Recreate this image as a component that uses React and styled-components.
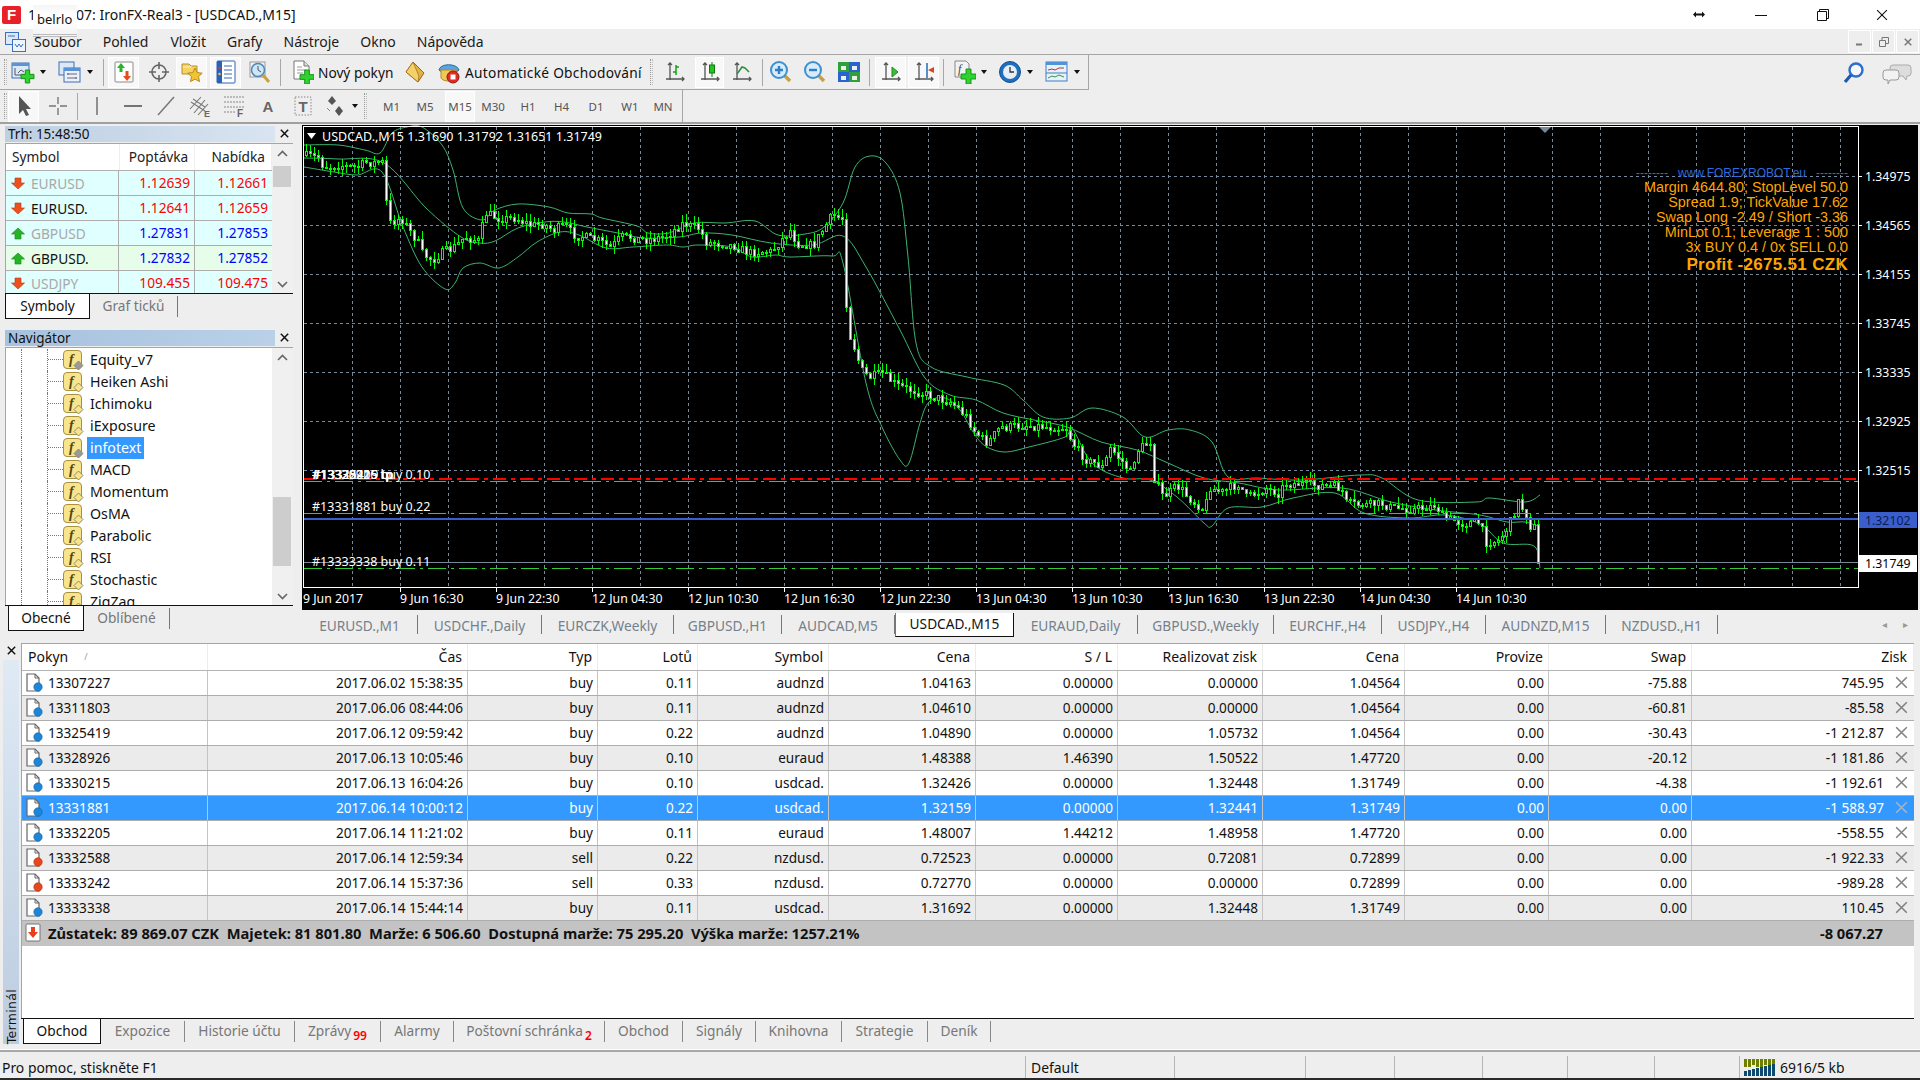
import React from "react";
import styled, { createGlobalStyle } from "styled-components";

const GlobalStyle = createGlobalStyle`
  html, body { margin: 0; padding: 0; background: #eeeeee; overflow: hidden; }
  body { font: 13.6px "Noto Sans", "Open Sans", sans-serif; color: #111; }
  * { box-sizing: border-box; }
`;

const Win = styled.div`
  width: 1920px;
  height: 1080px;
  display: flex;
  flex-direction: column;
  position: relative;
  overflow: hidden;
  background: #eeeeee;
`;

/* ---- title bar + menu ---- */
const TitleBar = styled.div`
  height: 29px;
  background: #fff;
  display: flex;
  align-items: center;
  padding-left: 2px;
  font-size: 14px;
`;
const AppLogo = styled.div`
  width: 19px;
  height: 18px;
  margin-right: 7px;
  background: #e8202a;
  border-radius: 2px;
  color: #fff;
  font: bold 15px "Liberation Sans", sans-serif;
  display: flex;
  align-items: center;
  justify-content: center;
`;
const TitleRest = styled.span`
  margin-left: 40px;
`;
const WinBtns = styled.div`
  margin-left: auto;
  display: flex;
  align-items: center;
`;
const WinBtn = styled.div`
  width: ${(p) => p.$w}px;
  display: flex;
  justify-content: center;
`;
const Smudge = styled.div`
  position: absolute;
  left: 33px;
  top: 5px;
  width: 44px;
  height: 32px;
  padding: 7px 0 0 4px;
  font-size: 13px;
  line-height: 14px;
  z-index: 5;
  background: linear-gradient(#f2f2f2cc, #ffffffee 40%, #f4f4f4dd);
  border-bottom: 3px double #bbb;
`;
const MenuBar = styled.div`
  height: 25px;
  display: flex;
  align-items: center;
  padding-left: 5px;
  font-size: 14px;
`;
const MenuItem = styled.div`
  margin-left: ${(p) => p.$ml}px;
  color: #1a1a1a;
`;
const MdiBtns = styled.div`
  margin-left: auto;
  display: flex;
  gap: 1px;
  padding-right: 1px;
`;
const MdiBtn = styled.div`
  width: 23px;
  height: 23px;
  border: 1px solid #fff;
  display: flex;
  align-items: center;
  justify-content: center;
`;

/* ---- toolbars ---- */
const Band = styled.div`
  height: ${(p) => p.$h}px;
  display: flex;
  border-top: ${(p) => (p.$top ? "1px solid #a5a5a5" : "none")};
`;
const ToolGroup = styled.div`
  width: ${(p) => p.$w}px;
  display: flex;
  align-items: center;
  padding-left: 4px;
  border-right: 1px solid #a5a5a5;
  border-bottom: ${(p) => (p.$bottom ? "1px solid #a5a5a5" : "none")};
`;
const Grip = styled.div`
  flex: none;
  width: 3px;
  height: 26px;
  margin-left: ${(p) => p.$ml || 0}px;
  border-left: 1px dotted #999;
  border-right: 1px dotted #bbb;
`;
const Sep = styled.div`
  flex: none;
  width: 1px;
  height: 27px;
  margin-left: ${(p) => p.$ml || 0}px;
  background: #a8a8a8;
`;
const Tool = styled.div`
  flex: none;
  width: ${(p) => p.$w}px;
  height: 31px;
  margin-left: ${(p) => p.$ml || 0}px;
  padding-left: ${(p) => p.$pl || 0}px;
  display: flex;
  align-items: center;
  justify-content: ${(p) => (p.$pl !== undefined ? "flex-start" : "center")};
  border: 1px solid ${(p) => (p.$on ? "#fff" : "transparent")};
  background: ${(p) => (p.$on ? "#f8f8f8" : "transparent")};
  white-space: nowrap;
  font-size: 13.7px;
`;
const Caret = styled.span`
  flex: none;
  margin-left: 5px;
  border-left: 3.5px solid transparent;
  border-right: 3.5px solid transparent;
  border-top: 4px solid #111;
`;
const ToolLabel = styled.span`
  margin-left: 4px;
  letter-spacing: ${(p) => p.$sp || 0}px;
`;
const PeriodLabel = styled.span`
  font-size: 11.5px;
  color: #555;
`;
const LetterA = styled.span`
  font: bold 15px "Liberation Sans", sans-serif;
  color: #666;
`;
const RightTools = styled.div`
  margin-left: auto;
  display: flex;
  align-items: center;
  gap: 16px;
  padding-right: 8px;
  height: 35px;
`;

/* ---- main area ---- */
const Main = styled.div`
  height: 515px;
  display: flex;
  border-top: 2px solid #a0a0a0;
`;
const LeftCol = styled.div`
  width: 302px;
  flex: none;
  padding: 2px 9px 0 5px;
  display: flex;
  flex-direction: column;
`;
const PanelHead = styled.div`
  display: flex;
  align-items: flex-start;
  height: 17px;
  width: 288px;
`;
const PanelTitle = styled.div`
  width: 270px;
  height: 16px;
  line-height: 16px;
  padding-left: 3px;
  font-size: 13.5px;
  background: ${(p) =>
    p.$active
      ? "linear-gradient(90deg, #a7c2de, #b9d0e8)"
      : "linear-gradient(90deg, #bdcfe1, #d8e4f1)"};
`;
const PanelClose = styled.div`
  flex: 1;
  display: flex;
  justify-content: center;
  padding-top: 3px;
`;
const Framed = styled.div`
  height: ${(p) => p.$h}px;
  display: flex;
  background: #fff;
  border-top: 1px solid #a5a5a5;
  overflow: hidden;
`;
const MarketTable = styled.div`
  width: 267px;
  flex: none;
  border-left: 1px solid #a5a5a5;
`;
const MarketHead = styled.div`
  display: flex;
  height: 27px;
  border-bottom: 1px solid #b0b0b0;
`;
const MarketHeadCell = styled.div`
  width: ${(p) => p.$w}px;
  padding: 0 6px;
  line-height: 26px;
  text-align: ${(p) => (p.$left ? "left" : "right")};
  border-right: 1px solid #eee;
  font-size: 13.7px;
  color: #222;
`;
const MarketRow = styled.div`
  display: flex;
  height: 25px;
  background: ${(p) => (p.$green ? "#e6fde9" : "#e0ffff")};
  border-bottom: 1px solid #acacac;
`;
const SymbolCell = styled.div`
  width: 113px;
  display: flex;
  align-items: center;
  gap: 6px;
  padding-left: 5px;
  color: ${(p) => (p.$dim ? "#a8a8a8" : "#111")};
  border-right: 1px solid #acacac;
  font-size: 13.7px;
`;
const PriceCell = styled.div`
  width: ${(p) => p.$w}px;
  padding-right: 4px;
  text-align: right;
  line-height: 24px;
  color: ${(p) => (p.$down ? "#ff0000" : "#0000ff")};
  border-right: ${(p) => (p.$last ? "none" : "1px solid #acacac")};
  font-size: 13.7px;
`;
const ScrollTrack = styled.div`
  flex: 1;
  background: #f0f0f0;
  position: relative;
  display: flex;
  flex-direction: column;
  align-items: center;
  justify-content: space-between;
  padding: 6px 0 5px;
`;
const ScrollThumb = styled.div`
  position: absolute;
  left: 1px;
  right: 2px;
  top: ${(p) => p.$top}px;
  height: ${(p) => p.$h}px;
  background: #cdcdcd;
`;
const SideTabs = styled.div`
  height: ${(p) => p.$h}px;
  display: flex;
  align-items: flex-start;
  border-top: 1px solid #111;
  font-size: 13.7px;
  padding-left: ${(p) => p.$pl || 0}px;
`;
const SideTab = styled.div`
  width: ${(p) => p.$w}px;
  height: ${(p) => (p.$on ? "25px" : "21px")};
  margin-top: ${(p) => (p.$on ? 0 : 2)}px;
  text-align: center;
  line-height: ${(p) => (p.$on ? "24px" : "20px")};
  color: ${(p) => (p.$on ? "#111" : "#777")};
  background: ${(p) => (p.$on ? "#fff" : "transparent")};
  border: ${(p) => (p.$on ? "1px solid #111" : "none")};
  border-top: none;
  border-right: ${(p) => (p.$on ? "1px solid #111" : "1px solid #777")};
`;
const TreeRow = styled.div`
  height: 22px;
  flex: none;
  display: flex;
  align-items: center;
`;
const TreeBody = styled.div`
  width: 267px;
  flex: none;
  padding-top: 1px;
  overflow: hidden;
  border-left: 1px solid #a5a5a5;
`;
const Guide = styled.div`
  height: 22px;
  width: ${(p) => p.$w}px;
  margin-left: ${(p) => p.$ml || 0}px;
  flex: none;
  border-left: 1px dotted #777;
`;
const Branch = styled.div`
  height: 11px;
  border-bottom: 1px dotted #777;
`;
const TreeLabel = styled.div`
  margin-left: ${(p) => (p.$sel ? 3 : 6)}px;
  padding: 0 ${(p) => (p.$sel ? 3 : 0)}px;
  line-height: 22px;
  font-size: 14.2px;
  background: ${(p) => (p.$sel ? "#3399ff" : "transparent")};
  color: ${(p) => (p.$sel ? "#fff" : "#111")};
`;

/* ---- chart ---- */
const ChartCol = styled.div`
  flex: 1;
  display: flex;
  flex-direction: column;
  padding: 1px 2px 0 0;
  min-width: 0;
`;
const ChartBox = styled.div`
  height: 485px;
  background: #000;
  position: relative;
  flex: none;
`;
const ChartSvg = styled.svg`
  display: block;
  font-family: "Noto Sans", sans-serif;
  white-space: pre;
`;
const InfoPanel = styled.div`
  position: absolute;
  right: 70px;
  top: 42px;
  text-align: right;
  font: 14.4px/15px "Liberation Sans", sans-serif;
  color: #ffa500;
  white-space: pre;
`;
const InfoHead = styled.div`
  color: #2f6bdc;
  font-size: 12px;
  line-height: 13px;
`;
const InfoProfit = styled.div`
  font-weight: bold;
  font-size: 17px;
  letter-spacing: 0.3px;
  line-height: 19px;
`;
const ChartTabs = styled.div`
  margin-top: 3px;
  height: 22px;
  display: flex;
  font-size: 13.7px;
`;
const ChartTab = styled.div`
  width: ${(p) => p.$w}px;
  text-align: center;
  line-height: ${(p) => (p.$on ? "22px" : "21px")};
  color: ${(p) => (p.$on ? "#111" : "#75808a")};
  background: ${(p) => (p.$on ? "#fff" : "transparent")};
  border-right: 1px solid ${(p) => (p.$on ? "#111" : "#777")};
  border-bottom: ${(p) => (p.$on ? "1px solid #111" : "none")};
  border-left: ${(p) => (p.$on ? "1px solid #777" : "none")};
  height: ${(p) => (p.$on ? "24px" : "19px")};
  margin-top: ${(p) => (p.$on ? 0 : 2)}px;
`;
const TabArrows = styled.div`
  margin-left: auto;
  display: flex;
  gap: 16px;
  padding: 4px 10px 0 0;
  color: #999;
  font-size: 10px;
`;

/* ---- terminal ---- */
const Terminal = styled.div`
  height: 413px;
  display: flex;
  padding-right: 6px;
  border-bottom: 1px solid #fff;
`;
const Strip = styled.div`
  width: 21px;
  flex: none;
  display: flex;
  flex-direction: column;
  padding: 9px 2px 5px 3px;
`;
const StripClose = styled.div`
  height: 14px;
  display: flex;
  justify-content: center;
`;
const StripBar = styled.div`
  flex: 1;
  display: flex;
  align-items: flex-start;
  justify-content: center;
  background: linear-gradient(#dfeaf5, #bcccdf);
`;
const StripText = styled.div`
  writing-mode: vertical-rl;
  transform: rotate(180deg);
  font: 12.5px "DejaVu Sans", sans-serif;
  letter-spacing: 0.3px;
  margin-top: auto;
`;
const TermBody = styled.div`
  flex: 1;
  display: flex;
  flex-direction: column;
  margin-top: 6px;
  min-width: 0;
`;
const Grid = styled.div`
  flex: 1;
  background: #fff;
  border-top: 1px solid #a5a5a5;
  border-left: 1px solid #a5a5a5;
  display: flex;
  flex-direction: column;
`;
const GridRow = styled.div`
  display: flex;
  height: 25px;
  flex: none;
  color: ${(p) => (p.$sel ? "#fff" : "#111")};
  background: ${(p) => (p.$sel ? "#3399ff" : p.$alt ? "#ebebeb" : "#fff")};
  border-bottom: 1px solid #adadad;
`;
const GridHead = styled(GridRow)`
  height: 27px;
  background: #fff;
  border-bottom: 1px solid #b4b4b4;
  font-size: 14px;
`;
const Cell = styled.div`
  width: ${(p) => p.$w}px;
  flex: none;
  display: flex;
  align-items: center;
  justify-content: ${(p) => (p.$left ? "flex-start" : "flex-end")};
  padding: ${(p) => (p.$left ? "0 0 1px 3px" : "0 4px 2px 0")};
  border-right: 1px solid ${(p) => (p.$head ? "#ececec" : "#c4c4c4")};
  white-space: nowrap;
  gap: 5px;
`;
const ProfitCell = styled(Cell)`
  padding-right: 6px;
  border-right: none;
  gap: 11px;
`;
const SortMark = styled.span`
  margin-left: 10px;
  color: #999;
  font-size: 9px;
`;
const HeadText = styled.span`
  padding-right: 1px;
  margin-left: ${(p) => p.$ml || 0}px;
  margin-right: ${(p) => p.$mr || 0}px;
`;
const TotalRow = styled.div`
  height: 25px;
  flex: none;
  display: flex;
  align-items: center;
  background: #c3c3c3;
  font-weight: 700;
  font-size: 14.7px;
  padding: 0 31px 2px 3px;
`;
const TotalText = styled.span`
  margin-left: 7px;
  white-space: pre;
`;
const TotalSum = styled.span`
  margin-left: auto;
`;
const TermTabs = styled.div`
  height: 31px;
  flex: none;
  display: flex;
  padding-left: 2px;
  border-top: 1px solid #111;
  font-size: 13.7px;
`;
const TermTab = styled.div`
  width: ${(p) => p.$w}px;
  height: ${(p) => (p.$on ? "25px" : "21px")};
  margin-top: ${(p) => (p.$on ? 0 : 2)}px;
  text-align: center;
  line-height: ${(p) => (p.$on ? "24px" : "20px")};
  color: ${(p) => (p.$on ? "#111" : "#777")};
  background: ${(p) => (p.$on ? "#fff" : "transparent")};
  border-left: ${(p) => (p.$on ? "1px solid #111" : "none")};
  border-bottom: ${(p) => (p.$on ? "1px solid #111" : "none")};
  border-right: 1px solid ${(p) => (p.$on ? "#111" : "#888")};
`;
const Badge = styled.sub`
  color: #ff0000;
  font-size: 12px;
  font-weight: 600;
  margin-left: 2px;
  line-height: 0;
`;

/* ---- status bar ---- */
const StatusBar = styled.div`
  height: 28px;
  display: flex;
  border-top: 2px solid #a8a8a8;
`;
const StatusCell = styled.div`
  width: ${(p) => p.$w}px;
  flex: none;
  display: flex;
  align-items: center;
  gap: 5px;
  margin-top: 4px;
  height: 23px;
  padding-left: ${(p) => p.$pl || 0}px;
  border-left: ${(p) => (p.$first ? "none" : "1px solid #b5b5b5")};
  font-size: 13.9px;
`;
const BottomEdge = styled.div`
  height: 2px;
  background: #2a2a2a;
  margin-top: auto;
`;

/* ---- icons ---- */
const Plus = ({ x = 12, y = 11, s = 12 }) => (
  <path
    d={`M${x + s / 3} ${y}h${s / 3}v${s / 3}h${s / 3}v${s / 3}h${-s / 3}v${s / 3}h${-s / 3}v${-s / 3}h${-s / 3}v${-s / 3}h${s / 3}z`}
    fill="#2fd32f"
    stroke="#138a13"
    strokeWidth="0.9"
  />
);
const Svg = ({ s = 24, children }) => (
  <svg width={s} height={s} viewBox="0 0 24 24" style={{ flex: "none" }}>
    {children}
  </svg>
);
const Axes = () => <path d="M7 3v17M3 19h18M5 5l2-2 2 2M19 17l2 2-2 2" fill="none" stroke="#555" strokeWidth="1.3" />;

const NewChartIcon = () => (
  <Svg>
    <rect x="1" y="3" width="17" height="15" fill="#dbe8f6" stroke="#3f6fb0" />
    <rect x="1" y="3" width="17" height="3" fill="#5c93d4" />
    <path d="M4 8v7h10M7 13l3-3 3 2" fill="none" stroke="#556" />
    <Plus x={10} y={10} s={13} />
  </Svg>
);
const ProfilesIcon = () => (
  <Svg>
    <rect x="1" y="2" width="15" height="13" fill="#dbe8f6" stroke="#3f6fb0" />
    <rect x="6" y="8" width="16" height="14" fill="#eaf1fa" stroke="#3f6fb0" />
    <rect x="6" y="8" width="16" height="3" fill="#5c93d4" />
    <path d="M9 14h10M9 18h10M10 13v2M18 17v2" stroke="#667" fill="none" />
  </Svg>
);
const MarketIcon = () => (
  <Svg>
    <rect x="3" y="2" width="18" height="20" rx="1" fill="#fff" stroke="#8a8a8a" />
    <path d="M9 3l4 5h-2.500v4h-3V8H5z" fill="#28b528" />
    <path d="M15 21l-4-5h2.500v-5h3v5H19z" fill="#e8491d" />
  </Svg>
);
const CrossIcon = () => (
  <Svg>
    <circle cx="12" cy="12" r="7" fill="none" stroke="#666" strokeWidth="1.6" />
    <path d="M12 2v7M12 15v7M2 12h7M15 12h7" stroke="#666" strokeWidth="1.6" />
  </Svg>
);
const FolderStarIcon = () => (
  <Svg>
    <path d="M2 4h7l2 2h6v8H2z" fill="#f4d264" stroke="#b8902c" />
    <path d="M3 7h8v-1" fill="none" stroke="#fff2bd" />
    <path d="M15 8l2.200 4.600 5 .6-3.700 3.400 1 5-4.500-2.500-4.500 2.500 1-5-3.700-3.400 5-.6z" fill="#f4c430" stroke="#b58a1b" />
  </Svg>
);
const TerminalIcon = () => (
  <Svg>
    <rect x="3" y="1" width="18" height="22" rx="1" fill="#fff" stroke="#2a62b8" />
    <rect x="3" y="1" width="5" height="22" fill="#2a62b8" />
    <path d="M10 6h8M10 10h8M10 14h8M10 18h8" stroke="#7a9cd0" strokeWidth="1.5" />
    <circle cx="5.5" cy="8" r="1.2" fill="#e34" />
    <circle cx="5.5" cy="14" r="1.2" fill="#fc3" />
  </Svg>
);
const TesterIcon = () => (
  <Svg>
    <rect x="2" y="2" width="15" height="15" fill="#f3f3f3" stroke="#999" />
    <circle cx="10" cy="10" r="6.5" fill="#cfe6f7" stroke="#4f88b8" strokeWidth="1.5" />
    <path d="M10 6v4l3 2" fill="none" stroke="#456" />
    <path d="M15 15l6 7" stroke="#c9a23c" strokeWidth="3" />
  </Svg>
);
const OrderIcon = () => (
  <Svg>
    <path d="M4 1h10l5 5v13H4z" fill="#fff" stroke="#777" />
    <path d="M14 1v5h5" fill="#ddd" stroke="#777" />
    <path d="M7 7h5M7 10h9M7 13h6" stroke="#999" />
    <Plus x={10} y={10} s={14} />
  </Svg>
);
const GoldIcon = () => (
  <Svg>
    <path d="M10 2l11 11-6 9L3 12z" fill="#e3b341" stroke="#96641a" />
    <path d="M10 2l-7 10 12 10 1-6z" fill="#f4d068" stroke="#96641a" strokeWidth="0.7" />
  </Svg>
);
const AutoIcon = () => (
  <Svg>
    <path d="M2 10c1-7 18-7 20 0-1 3-19 3-20 0z" fill="#5ca4dc" stroke="#2f6ba0" />
    <path d="M4 10v8c2 4 13 4 15 0v-8z" fill="#f2c75a" stroke="#b58a1b" />
    <circle cx="16" cy="17" r="6" fill="#e02c20" stroke="#901810" />
    <rect x="13.5" y="14.5" width="5" height="5" fill="#fff" />
  </Svg>
);
const BarsIcon = () => (
  <Svg>
    <Axes />
    <path d="M13 5v10M13 7h3M10 12h3" stroke="#18a018" strokeWidth="1.5" fill="none" />
  </Svg>
);
const CandleIcon = () => (
  <Svg>
    <Axes />
    <path d="M14 2v15" stroke="#0c7a0c" />
    <rect x="11.5" y="5" width="5" height="8" fill="#25c425" stroke="#0c7a0c" />
  </Svg>
);
const LineIcon = () => (
  <Svg>
    <Axes />
    <path d="M7 14l5-7 3 1 4 4" fill="none" stroke="#2c8f3c" strokeWidth="1.5" />
  </Svg>
);
const ZoomIcon = ({ minus }) => (
  <Svg>
    <path d="M15 15l6 6" stroke="#c9a23c" strokeWidth="3.5" />
    <circle cx="10" cy="10" r="8" fill="#d6ecfa" stroke="#3e8fd0" strokeWidth="2" />
    <path d={minus ? "M6 10h8" : "M6 10h8M10 6v8"} stroke="#2e7fc4" strokeWidth="2.4" />
  </Svg>
);
const TileIcon = () => (
  <Svg>
    <rect x="1" y="2" width="11" height="10" fill="#2fa03a" />
    <rect x="12" y="2" width="11" height="10" fill="#2c62d0" />
    <rect x="1" y="12" width="11" height="10" fill="#2c62d0" />
    <rect x="12" y="12" width="11" height="10" fill="#2fa03a" />
    <path d="M4 6h5v4H4zM15 6h5v4h-5zM4 16h5v4H4zM15 16h5v4h-5z" fill="#e8f0e8" />
  </Svg>
);
const ScrollIcon = () => (
  <Svg>
    <Axes />
    <path d="M13 7l6 5-6 5z" fill="#3bbf3b" stroke="#1f8a1f" />
  </Svg>
);
const ShiftIcon = () => (
  <Svg>
    <Axes />
    <path d="M15 3v15" stroke="#1f6fb8" strokeWidth="1.5" />
    <path d="M16 10l6-3v6z" fill="#d8481c" />
  </Svg>
);
const IndicatorIcon = () => (
  <Svg>
    <path d="M3 1h11l3 3v13H3z" fill="#f3f3f3" stroke="#888" />
    <text x="6" y="13" fontSize="12" fontStyle="italic" fontFamily="Liberation Serif" fill="#444">f</text>
    <Plus x={9} y={9} s={15} />
  </Svg>
);
const ClockIcon = () => (
  <Svg>
    <circle cx="12" cy="12" r="10.5" fill="#1f6fc0" stroke="#12508f" />
    <circle cx="12" cy="12" r="7" fill="#e6eef6" />
    <path d="M12 7v5h4" fill="none" stroke="#333" strokeWidth="1.3" />
  </Svg>
);
const TemplateIcon = () => (
  <Svg>
    <rect x="1" y="2" width="21" height="19" fill="#e8f1fb" stroke="#3f7fc4" />
    <rect x="1" y="2" width="21" height="3" fill="#4f93d8" />
    <path d="M1 13h21" stroke="#3f7fc4" />
    <path d="M3 10l4-1 3 1 4-2 5 0" fill="none" stroke="#b5351c" />
    <path d="M3 18l4-2 3 1 4-2 5 2" fill="none" stroke="#2f9a3c" />
  </Svg>
);
const ArrowCursor = () => (
  <Svg>
    <path d="M7 2v18l4-4 3 6 3-1-3-6h5z" fill="#555" />
  </Svg>
);
const ThinCross = () => (
  <Svg>
    <path d="M12 3v7M12 14v7M3 12h7M14 12h7" stroke="#777" strokeWidth="1.4" />
  </Svg>
);
const VLineIcon = () => <Svg><path d="M12 3v18" stroke="#777" strokeWidth="1.6" /></Svg>;
const HLineIcon = () => <Svg><path d="M3 12h18" stroke="#666" strokeWidth="1.8" /></Svg>;
const TrendIcon = () => <Svg><path d="M4 21L20 3" stroke="#777" strokeWidth="1.5" /></Svg>;
const ChannelIcon = () => (
  <Svg>
    <path d="M2 15L13 3M6 19L17 6M10 21L20 10M3 8l14 9M5 5l12 8" stroke="#777" strokeWidth="1.1" fill="none" />
    <text x="16" y="23" fontSize="9" fontWeight="bold" fontFamily="Liberation Sans" fill="#666">E</text>
  </Svg>
);
const FiboIcon = () => (
  <Svg>
    <path d="M2 3h20M2 8h20M2 13h20M2 18h11" stroke="#888" strokeDasharray="2 1" />
    <text x="15" y="23" fontSize="10" fontWeight="bold" fontFamily="Liberation Sans" fill="#666">F</text>
  </Svg>
);
const TextBoxIcon = () => (
  <Svg>
    <rect x="4" y="3" width="16" height="18" fill="none" stroke="#888" strokeDasharray="1.5 1.5" />
    <text x="12" y="18" textAnchor="middle" fontSize="15" fontWeight="bold" fontFamily="Liberation Sans" fill="#666">T</text>
  </Svg>
);
const ShapesIcon = () => (
  <Svg>
    <path d="M5 7l4-5 4 5-4 4z" fill="#555" />
    <path d="M12 17l4-5 4 5-4 5z" fill="#555" />
    <path d="M4 14l3 3" stroke="#888" />
  </Svg>
);
const SearchIcon = () => (
  <Svg>
    <circle cx="14" cy="9" r="6.5" fill="#f4f8fd" stroke="#2c6fc8" strokeWidth="2.4" />
    <path d="M9 14l-6 7" stroke="#1f58b0" strokeWidth="3.2" />
  </Svg>
);
const ChatIcon = () => (
  <svg width="30" height="24" viewBox="0 0 30 24">
    <path d="M11 4h15a3 3 0 013 3v5a3 3 0 01-3 3h-1l-1 4-3-4h-10a3 3 0 01-3-3V7a3 3 0 013-3z" fill="#ddd" stroke="#aaa" />
    <path d="M4 9h10a3 3 0 013 3v4a3 3 0 01-3 3H8l-2 4v-4H4a3 3 0 01-3-3v-4a3 3 0 013-3z" fill="#f2f2f2" stroke="#999" />
  </svg>
);
const XIcon = ({ s = 11, c = "#111", w = 1.6 }) => (
  <svg width={s} height={s} viewBox="0 0 11 11" style={{ flex: "none" }}>
    <path d="M1 1l9 9M10 1l-9 9" stroke={c} strokeWidth={w} />
  </svg>
);
const Chevron = ({ up }) => (
  <svg width="11" height="7" viewBox="0 0 11 7">
    <path d={up ? "M1 6l4.500-4.500L10 6" : "M1 1l4.500 4.500L10 1"} fill="none" stroke="#666" strokeWidth="1.6" />
  </svg>
);
const TickArrow = ({ down }) => (
  <svg width="14" height="13" viewBox="0 0 14 13" style={{ flex: "none" }}>
    {down ? (
      <path d="M4 1h6v5h3.500L7 12 .5 6H4z" fill="#ee4f1e" stroke="#b53a12" strokeWidth="0.6" />
    ) : (
      <path d="M7 1l6.500 6H10v5H4V7H.5z" fill="#27b327" stroke="#158515" strokeWidth="0.6" />
    )}
  </svg>
);
const FuncIcon = ({ gray }) => (
  <svg width="21" height="21" viewBox="0 0 21 21" style={{ flex: "none" }}>
    <rect x="0.5" y="0.5" width="18" height="18" rx="3.5" fill="#f8e48c" stroke="#a8913c" />
    <text x="6" y="14" fontSize="14" fontStyle="italic" fontWeight="bold" fontFamily="Liberation Serif" fill="#54460f">f</text>
    <path d="M15.500 11l4.500 4.500-4.500 4.500-4.500-4.500z" fill={gray ? "#9a9a9a" : "#f8e48c"} stroke="#8d8d70" />
  </svg>
);
const OrderDoc = ({ sell }) => (
  <svg width="18" height="19" viewBox="0 0 18 19" style={{ flex: "none" }}>
    <path d="M2 1h8l4 4v13H2z" fill="#fff" stroke="#666" strokeWidth="1.2" />
    <path d="M10 1v4h4" fill="none" stroke="#666" />
    <circle cx="13" cy="14" r="4.2" fill={sell ? "#e8481c" : "#1d86d8"} stroke={sell ? "#a82c0c" : "#1060a0"} strokeWidth="0.6" />
  </svg>
);
const TotalIcon = () => (
  <svg width="16" height="19" viewBox="0 0 16 19" style={{ flex: "none" }}>
    <rect x="1" y="1" width="14" height="17" rx="1" fill="#fff" stroke="#777" />
    <path d="M6 4h4v5h3l-5 6-5-6h3z" fill="#e8401c" />
  </svg>
);
const TrafficIcon = () => (
  <svg width="31" height="17" viewBox="0 0 31 17" style={{ flex: "none" }}>
    {Array.from({ length: 8 }).map((_, i) => (
      <g key={i}>
        <rect x={i * 4} y="0" width="3" height={8 - (i % 3 === 2 ? 2 : 0)} fill="#6e7f00" />
        <rect x={i * 4} y={12 - i} width="3" height={5 + i} fill="#0e4a70" />
      </g>
    ))}
  </svg>
);

/* ---- chart data ---- */
const closePts = [
  [304,155],[319,157],[323,167],[338,165],[357,167],[365,162],[382,162],[385,197],[390,222],[401,218],[409,230],[417,240],[422,253],[432,260],[442,252],[453,247],[465,237],[478,240],[486,213],[499,218],[516,218],[530,225],[541,223],[553,230],[564,225],[575,235],[598,240],[610,247],[621,236],[644,239],[664,237],[683,223],[698,228],[706,242],[721,243],[732,245],[748,252],[771,251],[790,230],[797,243],[813,245],[832,215],[844,218],[845,293],[849,333],[855,350],[861,370],[870,377],[882,373],[897,385],[925,394],[951,402],[965,415],[976,433],[987,443],[1000,427],[1029,425],[1052,427],[1067,428],[1072,443],[1087,460],[1103,467],[1110,448],[1121,460],[1130,472],[1137,450],[1152,440],[1154,478],[1163,497],[1177,485],[1188,497],[1204,510],[1210,487],[1221,492],[1239,483],[1246,497],[1266,488],[1279,493],[1284,483],[1306,484],[1340,487],[1346,502],[1364,505],[1382,503],[1391,507],[1413,509],[1436,505],[1442,516],[1462,523],[1480,522],[1485,542],[1498,540],[1507,528],[1518,502],[1527,515],[1529,525],[1536,527],[1537,567],[1541,560],
];
const upperBand = [
  [304,145],[338,145],[365,150],[380,153],[392,133],[407,127],[422,127],[442,145],[453,170],[463,208],[482,220],[495,210],[518,204],[549,207],[568,213],[591,214],[602,218],[637,226],[648,233],[669,233],[694,223],[725,223],[755,221],[778,235],[805,234],[824,227],[843,203],[855,167],[870,156],[886,163],[900,193],[908,257],[916,343],[931,367],[967,377],[1004,385],[1023,400],[1043,417],[1070,418],[1092,408],[1123,417],[1145,437],[1168,430],[1190,430],[1212,442],[1228,477],[1257,478],[1302,480],[1360,475],[1382,478],[1418,500],[1476,502],[1489,498],[1525,502],[1540,495],
];
const midBand = [
  [304,158],[338,159],[384,163],[426,208],[461,237],[480,243],[495,241],[518,228],[545,222],[564,222],[587,227],[618,233],[644,238],[679,237],[702,233],[732,235],[771,243],[813,245],[843,236],[866,267],[900,330],[925,378],[950,395],[976,400],[1003,413],[1034,420],[1067,427],[1101,442],[1137,450],[1168,463],[1204,478],[1239,483],[1279,490],[1342,488],[1391,502],[1436,510],[1480,515],[1507,522],[1525,522],[1540,527],
];
const lowerBand = [
  [304,167],[334,172],[357,175],[382,172],[403,227],[422,267],[445,289],[455,283],[463,268],[480,263],[499,268],[518,257],[537,242],[560,232],[579,235],[606,248],[633,247],[667,245],[683,247],[698,245],[732,247],[752,257],[775,255],[790,257],[832,256],[843,263],[866,383],[882,427],[900,460],[909,463],[920,423],[929,402],[945,398],[960,410],[975,435],[987,447],[1005,452],[1029,447],[1065,437],[1072,428],[1092,463],[1123,478],[1150,480],[1177,497],[1204,523],[1212,526],[1228,508],[1262,507],[1293,498],[1335,493],[1364,513],[1409,518],[1445,515],[1480,524],[1503,543],[1534,546],[1540,568],
];

const interp = (pts, x) => {
  for (let i = 1; i < pts.length; i++) {
    if (x <= pts[i][0]) {
      const [x0, y0] = pts[i - 1];
      const [x1, y1] = pts[i];
      return y0 + ((y1 - y0) * (x - x0)) / (x1 - x0);
    }
  }
  return pts[pts.length - 1][1];
};

// catmull-rom through the traced points, the bands are curves
const smooth = (pts) => {
  let d = `M${pts[0][0]} ${pts[0][1]}`;
  for (let i = 0; i < pts.length - 1; i++) {
    const p0 = pts[i - 1] || pts[i];
    const p1 = pts[i];
    const p2 = pts[i + 1];
    const p3 = pts[i + 2] || p2;
    const c1x = (p1[0] + (p2[0] - p0[0]) / 6).toFixed(1);
    const c1y = (p1[1] + (p2[1] - p0[1]) / 6).toFixed(1);
    const c2x = (p2[0] - (p3[0] - p1[0]) / 6).toFixed(1);
    const c2y = (p2[1] - (p3[1] - p1[1]) / 6).toFixed(1);
    d += `C${c1x} ${c1y} ${c2x} ${c2y} ${p2[0]} ${p2[1]}`;
  }
  return d;
};

let seed = 7;
const rnd = () => {
  seed = (seed * 16807) % 2147483647;
  return seed / 2147483647;
};

const candles = [];
let prevClose = Math.round(interp(closePts, 306));
for (let x = 306; x <= 1541; x += 4) {
  const open = prevClose;
  const close = Math.round(interp(closePts, x) + (rnd() - 0.5) * 9);
  const top = Math.min(open, close);
  const bot = Math.max(open, close);
  candles.push({
    x,
    top,
    bot,
    bear: close > open,
    hi: Math.round(top - rnd() * 8),
    lo: Math.round(bot + rnd() * 8),
  });
  prevClose = close;
}

const gridX = Array.from({ length: 32 }, (_, i) => 352 + 48 * i);
const priceRows = [
  ["1.34975", 176],
  ["1.34565", 225],
  ["1.34155", 274],
  ["1.33745", 323],
  ["1.33335", 372],
  ["1.32925", 421],
  ["1.32515", 470],
];
const timeLabels = [
  ["9 Jun 2017", 303],
  ["9 Jun 16:30", 400],
  ["9 Jun 22:30", 496],
  ["12 Jun 04:30", 592],
  ["12 Jun 10:30", 688],
  ["12 Jun 16:30", 784],
  ["12 Jun 22:30", 880],
  ["13 Jun 04:30", 976],
  ["13 Jun 10:30", 1072],
  ["13 Jun 16:30", 1168],
  ["13 Jun 22:30", 1264],
  ["14 Jun 04:30", 1360],
  ["14 Jun 10:30", 1456],
];

const PriceChart = () => (
  <ChartSvg width="1616" height="485" viewBox="302 125 1616 485">
    <g stroke="#778899" strokeDasharray="3 3" shapeRendering="crispEdges">
      {priceRows.map(([, y]) => (
        <line key={y} x1="304" x2="1858" y1={y + 0.5} y2={y + 0.5} />
      ))}
      {gridX.map((x) => (
        <line key={x} x1={x + 0.5} x2={x + 0.5} y1="127" y2="587" />
      ))}
    </g>
    <g fill="none" stroke="#3cb371">
      <path d={smooth(upperBand)} />
      <path d={smooth(midBand)} />
      <path d={smooth(lowerBand)} />
    </g>
    <g stroke="#00ff00" shapeRendering="crispEdges">
      {candles.map((c) => (
        <g key={c.x}>
          <line x1={c.x + 0.5} x2={c.x + 0.5} y1={c.hi} y2={c.lo} />
          <rect x={c.x - 0.5} y={c.top + 0.5} width="2" height={Math.max(c.bot - c.top, 1)} fill={c.bear ? "#fff" : "#000"} />
        </g>
      ))}
    </g>
    <g shapeRendering="crispEdges" fill="none">
      <line x1="304" x2="1858" y1="481.5" y2="481.5" stroke="#32cd32" strokeDasharray="18 5 3 5" />
      <line x1="304" x2="1858" y1="513.5" y2="513.5" stroke="#32cd32" strokeDasharray="18 5 3 5" />
      <line x1="304" x2="1858" y1="568.5" y2="568.5" stroke="#32cd32" strokeDasharray="18 5 3 5" />
      <line x1="304" x2="1858" y1="479" y2="479" stroke="#ff0000" strokeWidth="2" strokeDasharray="13 5 4 5" />
      <line x1="304" x2="1858" y1="519" y2="519" stroke="#3a5fcd" strokeWidth="2" />
      <line x1="304" x2="1858" y1="562.5" y2="562.5" stroke="#778899" />
    </g>
    <g fill="#fff" fontSize="12.5">
      <text x="312" y="479">#13330215 buy 0.10</text>
      <text x="312" y="478.5">#13328926 tp</text>
      <text x="312.5" y="479">#13332205 tp</text>
      <text x="313" y="478.5">#13325419 tp</text>
      <text x="312" y="511">#13331881 buy 0.22</text>
      <text x="312" y="566">#13333338 buy 0.11</text>
    </g>
    <rect x="303.5" y="126.5" width="1555" height="461" fill="none" stroke="#fff" shapeRendering="crispEdges" />
    <g stroke="#fff" shapeRendering="crispEdges">
      {priceRows.map(([, y]) => (
        <line key={y} x1="1858" x2="1862" y1={y + 0.5} y2={y + 0.5} />
      ))}
      {timeLabels.slice(1).map(([, x]) => (
        <line key={x} x1={x + 0.5} x2={x + 0.5} y1="587" y2="592" />
      ))}
    </g>
    <g fill="#fff" fontSize="12.3">
      {priceRows.map(([t, y]) => (
        <text key={t} x="1865" y={y + 4.5}>{t}</text>
      ))}
      {timeLabels.map(([t, x]) => (
        <text key={t} x={x} y="603">{t}</text>
      ))}
      <text x="322" y="141" fontSize="12.5">USDCAD.,M15  1.31690 1.31792 1.31651 1.31749</text>
    </g>
    <path d="M307 133h9l-4.500 6z" fill="#fff" />
    <path d="M1539 127h12l-6 6z" fill="#778899" />
    <rect x="1859" y="512" width="58" height="16" fill="#3a5fcd" />
    <text x="1865" y="524.5" fontSize="12.3" fill="#0b1c55">1.32102</text>
    <rect x="1859" y="555" width="58" height="17" fill="#fff" />
    <text x="1865" y="568" fontSize="12.3" fill="#000">1.31749</text>
  </ChartSvg>
);

/* ---- content ---- */
const quotes = [
  { s: "EURUSD", bid: "1.12639", ask: "1.12661", down: true, dim: true },
  { s: "EURUSD.", bid: "1.12641", ask: "1.12659", down: true },
  { s: "GBPUSD", bid: "1.27831", ask: "1.27853", dim: true },
  { s: "GBPUSD.", bid: "1.27832", ask: "1.27852", green: true },
  { s: "USDJPY", bid: "109.455", ask: "109.475", down: true, dim: true },
];
const navItems = ["Equity_v7", "Heiken Ashi", "Ichimoku", "iExposure", "infotext", "MACD", "Momentum", "OsMA", "Parabolic", "RSI", "Stochastic", "ZigZag"];
const chartTabs = [
  ["EURUSD.,M1", 116], ["USDCHF.,Daily", 124], ["EURCZK,Weekly", 132], ["GBPUSD.,H1", 108], ["AUDCAD,M5", 113],
  ["USDCAD.,M15", 119, true], ["EURAUD,Daily", 124], ["GBPUSD.,Weekly", 136], ["EURCHF.,H4", 108], ["USDJPY.,H4", 104],
  ["AUDNZD,M15", 120], ["NZDUSD.,H1", 112],
];
const colW = [186, 260, 130, 100, 131, 147, 142, 145, 142, 144, 143, 222];
const headers = ["Pokyn", "Čas", "Typ", "Lotů", "Symbol", "Cena", "S / L", "Realizovat zisk", "Cena", "Provize", "Swap", "Zisk"];
const orders = [
  ["13307227", "2017.06.02 15:38:35", "buy", "0.11", "audnzd", "1.04163", "0.00000", "0.00000", "1.04564", "0.00", "-75.88", "745.95"],
  ["13311803", "2017.06.06 08:44:06", "buy", "0.11", "audnzd", "1.04610", "0.00000", "0.00000", "1.04564", "0.00", "-60.81", "-85.58"],
  ["13325419", "2017.06.12 09:59:42", "buy", "0.22", "audnzd", "1.04890", "0.00000", "1.05732", "1.04564", "0.00", "-30.43", "-1 212.87"],
  ["13328926", "2017.06.13 10:05:46", "buy", "0.10", "euraud", "1.48388", "1.46390", "1.50522", "1.47720", "0.00", "-20.12", "-1 181.86"],
  ["13330215", "2017.06.13 16:04:26", "buy", "0.10", "usdcad.", "1.32426", "0.00000", "1.32448", "1.31749", "0.00", "-4.38", "-1 192.61"],
  ["13331881", "2017.06.14 10:00:12", "buy", "0.22", "usdcad.", "1.32159", "0.00000", "1.32441", "1.31749", "0.00", "0.00", "-1 588.97"],
  ["13332205", "2017.06.14 11:21:02", "buy", "0.11", "euraud", "1.48007", "1.44212", "1.48958", "1.47720", "0.00", "0.00", "-558.55"],
  ["13332588", "2017.06.14 12:59:34", "sell", "0.22", "nzdusd.", "0.72523", "0.00000", "0.72081", "0.72899", "0.00", "0.00", "-1 922.33"],
  ["13333242", "2017.06.14 15:37:36", "sell", "0.33", "nzdusd.", "0.72770", "0.00000", "0.00000", "0.72899", "0.00", "0.00", "-989.28"],
  ["13333338", "2017.06.14 15:44:14", "buy", "0.11", "usdcad.", "1.31692", "0.00000", "1.32448", "1.31749", "0.00", "0.00", "110.45"],
];
const termTabs = [
  ["Obchod", 78, true], ["Expozice", 84], ["Historie účtu", 110], ["Zprávy", 86, false, "99"], ["Alarmy", 73],
  ["Poštovní schránka", 151, false, "2"], ["Obchod", 78], ["Signály", 73], ["Knihovna", 86], ["Strategie", 86], ["Deník", 63],
];
const statusCells = [131, 89, 88, 85, 87, 85];
const periods = [
  ["M1", 33, 8], ["M5", 32, 1], ["M15", 30, 4, true], ["M30", 34, 1], ["H1", 34, 1], ["H4", 33, 0], ["D1", 34, 1], ["W1", 34, 0], ["MN", 32, 0],
];

const App = () => (
  <Win>
    <GlobalStyle />
    <Smudge>belrlo</Smudge>
    <TitleBar>
      <AppLogo>F</AppLogo>
      1<TitleRest>07: IronFX-Real3 - [USDCAD.,M15]</TitleRest>
      <WinBtns>
        <WinBtn $w={58}>
          <svg width="12" height="9" viewBox="0 0 12 9"><path d="M0 4.500L3 1.500v2h6v-2l3 3-3 3v-2H3v2z" fill="#111" /></svg>
        </WinBtn>
        <WinBtn $w={66}>
          <svg width="12" height="12" viewBox="0 0 12 12"><path d="M0 6.500h12" stroke="#111" /></svg>
        </WinBtn>
        <WinBtn $w={58}>
          <svg width="12" height="12" viewBox="0 0 12 12"><path d="M.5 2.500h9v9h-9zM2.500 2.500v-2h9v9h-2" fill="none" stroke="#111" /></svg>
        </WinBtn>
        <WinBtn $w={60}>
          <XIcon s={12} w={1} />
        </WinBtn>
        <WinBtn $w={8} />
      </WinBtns>
    </TitleBar>

    <MenuBar>
      <svg width="21" height="20" viewBox="0 0 21 20">
        <rect x="0.5" y="0.5" width="13" height="12" fill="#dce8f8" stroke="#3a70c0" />
        <rect x="7.5" y="7.5" width="13" height="12" fill="#eef4fc" stroke="#3a70c0" />
        <path d="M3 4h7M10 12l2 3 2-3 2 3 2-3" fill="none" stroke="#3a70c0" />
      </svg>
      <MenuItem $ml={8}>Soubor</MenuItem>
      <MenuItem $ml={21}>Pohled</MenuItem>
      <MenuItem $ml={22}>Vložit</MenuItem>
      <MenuItem $ml={21}>Grafy</MenuItem>
      <MenuItem $ml={21}>Nástroje</MenuItem>
      <MenuItem $ml={21}>Okno</MenuItem>
      <MenuItem $ml={21}>Nápověda</MenuItem>
      <MdiBtns>
        <MdiBtn><svg width="9" height="9" viewBox="0 0 9 9"><path d="M1 7.500h6" stroke="#777" strokeWidth="2" /></svg></MdiBtn>
        <MdiBtn><svg width="10" height="10" viewBox="0 0 10 10"><path d="M.5 3.500h6v6h-6zM3 3V.5h6.500v6H7" fill="none" stroke="#777" /></svg></MdiBtn>
        <MdiBtn><XIcon s={8} c="#777" w={2} /></MdiBtn>
      </MdiBtns>
    </MenuBar>

    <Band $h={36} $top>
      <ToolGroup $w={1089} $bottom>
        <Grip />
        <Tool $w={42} $ml={1} $pl={2}><NewChartIcon /><Caret /></Tool>
        <Tool $w={42} $ml={4} $pl={3}><ProfilesIcon /><Caret /></Tool>
        <Sep $ml={7} />
        <Tool $w={31} $ml={4} $on><MarketIcon /></Tool>
        <Tool $w={33} $ml={3}><CrossIcon /></Tool>
        <Tool $w={31} $ml={1} $on><FolderStarIcon /></Tool>
        <Tool $w={31} $ml={3} $on><TerminalIcon /></Tool>
        <Tool $w={32} $ml={3}><TesterIcon /></Tool>
        <Sep $ml={4} />
        <Tool $w={108} $ml={7} $pl={1}><OrderIcon /><ToolLabel>Nový pokyn</ToolLabel></Tool>
        <Tool $w={30} $ml={4}><GoldIcon /></Tool>
        <Tool $w={212} $ml={4} $pl={2}><AutoIcon /><ToolLabel $sp={0.3}>Automatické Obchodování</ToolLabel></Tool>
        <Grip $ml={4} />
        <Tool $w={30} $ml={7}><BarsIcon /></Tool>
        <Tool $w={29} $ml={5} $on><CandleIcon /></Tool>
        <Tool $w={30} $ml={3}><LineIcon /></Tool>
        <Sep $ml={5} />
        <Tool $w={30} $ml={3}><ZoomIcon /></Tool>
        <Tool $w={30} $ml={4}><ZoomIcon minus /></Tool>
        <Tool $w={30} $ml={4}><TileIcon /></Tool>
        <Sep $ml={5} />
        <Tool $w={31} $ml={5} $on><ScrollIcon /></Tool>
        <Tool $w={31} $ml={2} $on><ShiftIcon /></Tool>
        <Sep $ml={4} />
        <Tool $w={40} $ml={6} $pl={1}><IndicatorIcon /><Caret /></Tool>
        <Tool $w={40} $ml={5} $pl={2}><ClockIcon /><Caret /></Tool>
        <Tool $w={41} $ml={7} $pl={2}><TemplateIcon /><Caret /></Tool>
      </ToolGroup>
      <RightTools>
        <SearchIcon />
        <ChatIcon />
      </RightTools>
    </Band>

    <Band $h={32}>
      <ToolGroup $w={683}>
        <Grip />
        <Tool $w={31} $ml={1} $on><ArrowCursor /></Tool>
        <Tool $w={32} $ml={3}><ThinCross /></Tool>
        <Sep $ml={3} />
        <Tool $w={32} $ml={3}><VLineIcon /></Tool>
        <Tool $w={32} $ml={4}><HLineIcon /></Tool>
        <Tool $w={32} $ml={1}><TrendIcon /></Tool>
        <Tool $w={32} $ml={2}><ChannelIcon /></Tool>
        <Tool $w={32} $ml={2}><FiboIcon /></Tool>
        <Tool $w={32} $ml={2}><LetterA>A</LetterA></Tool>
        <Tool $w={32} $ml={3}><TextBoxIcon /></Tool>
        <Tool $w={42} $pl={3}><ShapesIcon /><Caret /></Tool>
        <Grip $ml={3} />
        {periods.map(([label, w, ml, on]) => (
          <Tool key={label} $w={w} $ml={ml} $on={on}><PeriodLabel>{label}</PeriodLabel></Tool>
        ))}
      </ToolGroup>
    </Band>

    <Main>
      <LeftCol>
        <PanelHead>
          <PanelTitle>Trh: 15:48:50</PanelTitle>
          <PanelClose><XIcon s={9} w={1.8} /></PanelClose>
        </PanelHead>
        <Framed $h={150}>
          <MarketTable>
            <MarketHead>
              <MarketHeadCell $w={114} $left>Symbol</MarketHeadCell>
              <MarketHeadCell $w={76}>Poptávka</MarketHeadCell>
              <MarketHeadCell $w={77}>Nabídka</MarketHeadCell>
            </MarketHead>
            {quotes.map((q) => (
              <MarketRow key={q.s} $green={q.green}>
                <SymbolCell $dim={q.dim}><TickArrow down={q.down} />{q.s}</SymbolCell>
                <PriceCell $w={76} $down={q.down}>{q.bid}</PriceCell>
                <PriceCell $w={77} $down={q.down} $last>{q.ask}</PriceCell>
              </MarketRow>
            ))}
          </MarketTable>
          <ScrollTrack>
            <Chevron up />
            <ScrollThumb $top={22} $h={21} />
            <Chevron />
          </ScrollTrack>
        </Framed>
        <SideTabs $h={37}>
          <SideTab $w={85} $on>Symboly</SideTab>
          <SideTab $w={88}>Graf ticků</SideTab>
        </SideTabs>
        <PanelHead>
          <PanelTitle $active>Navigátor</PanelTitle>
          <PanelClose><XIcon s={9} w={1.8} /></PanelClose>
        </PanelHead>
        <Framed $h={258}>
          <TreeBody>
            {navItems.map((name) => (
              <TreeRow key={name}>
                <Guide $w={26} $ml={15} />
                <Guide $w={16}><Branch /></Guide>
                <FuncIcon gray={name === "Equity_v7" || name === "infotext"} />
                <TreeLabel $sel={name === "infotext"}>{name}</TreeLabel>
              </TreeRow>
            ))}
          </TreeBody>
          <ScrollTrack>
            <Chevron up />
            <ScrollThumb $top={149} $h={69} />
            <Chevron />
          </ScrollTrack>
        </Framed>
        <SideTabs $h={30} $pl={3}>
          <SideTab $w={76} $on>Obecné</SideTab>
          <SideTab $w={86}>Oblíbené</SideTab>
        </SideTabs>
      </LeftCol>

      <ChartCol>
        <ChartBox>
          <PriceChart />
          <InfoPanel>
            <InfoHead>{"--------   www.FOREXROBOT.eu   --------"}</InfoHead>
            <div>Margin 4644.80; StopLevel 50.0</div>
            <div>Spread 1.9; TickValue 17.62</div>
            <div>Swap Long -2.49 / Short -3.36</div>
            <div>MinLot 0.1; Leverage 1 : 500</div>
            <div>3x BUY 0.4 / 0x SELL 0.0</div>
            <InfoProfit>Profit -2675.51 CZK</InfoProfit>
          </InfoPanel>
        </ChartBox>
        <ChartTabs>
          {chartTabs.map(([label, w, on]) => (
            <ChartTab key={label} $w={w} $on={on}>{label}</ChartTab>
          ))}
          <TabArrows><span>◂</span><span>▸</span></TabArrows>
        </ChartTabs>
      </ChartCol>
    </Main>

    <Terminal>
      <Strip>
        <StripClose><XIcon s={9} w={1.8} /></StripClose>
        <StripBar><StripText>Terminál</StripText></StripBar>
      </Strip>
      <TermBody>
        <Grid>
          <GridHead>
            {headers.map((h, i) => (
              <Cell key={i} $w={colW[i]} $left={i === 0} $head>
                <HeadText $ml={i === 0 ? 3 : 0} $mr={i === 11 ? 1 : 0}>{h}</HeadText>
                {i === 0 && <SortMark>/</SortMark>}
              </Cell>
            ))}
          </GridHead>
          {orders.map((o, r) => (
            <GridRow key={o[0]} $alt={r % 2 === 1} $sel={o[0] === "13331881"}>
              {o.map((v, i) =>
                i === 0 ? (
                  <Cell key={i} $w={colW[i]} $left>
                    <OrderDoc sell={o[2] === "sell"} />
                    {v}
                  </Cell>
                ) : i === 11 ? (
                  <ProfitCell key={i} $w={colW[i]}>
                    {v}
                    <XIcon s={13} c={o[0] === "13331881" ? "#a9b4c0" : "#808080"} w={1.3} />
                  </ProfitCell>
                ) : (
                  <Cell key={i} $w={colW[i]}>{v}</Cell>
                )
              )}
            </GridRow>
          ))}
          <TotalRow>
            <TotalIcon />
            <TotalText>{"Zůstatek: 89 869.07 CZK  Majetek: 81 801.80  Marže: 6 506.60  Dostupná marže: 75 295.20  Výška marže: 1257.21%"}</TotalText>
            <TotalSum>-8 067.27</TotalSum>
          </TotalRow>
        </Grid>
        <TermTabs>
          {termTabs.map(([label, w, on, badge], i) => (
            <TermTab key={i} $w={w} $on={on}>
              {label}
              {badge && <Badge>{badge}</Badge>}
            </TermTab>
          ))}
        </TermTabs>
      </TermBody>
    </Terminal>

    <StatusBar>
      <StatusCell $w={1025} $pl={2} $first>Pro pomoc, stiskněte F1</StatusCell>
      <StatusCell $w={149} $pl={5}>Default</StatusCell>
      {statusCells.map((w, i) => (
        <StatusCell key={i} $w={w} />
      ))}
      <StatusCell $w={181} $pl={4}>
        <TrafficIcon />
        6916/5 kb
      </StatusCell>
    </StatusBar>
    <BottomEdge />
  </Win>
);

export default App;
